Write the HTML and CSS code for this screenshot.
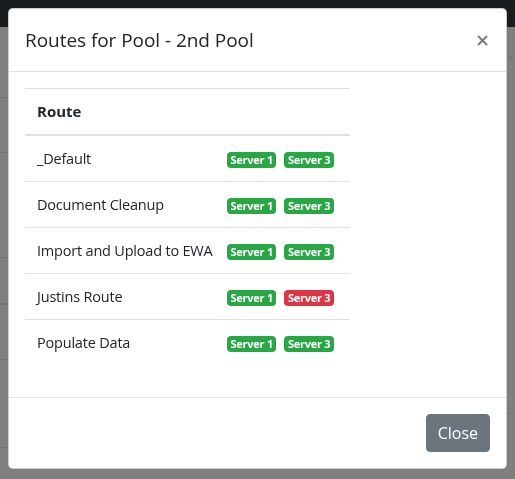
FILE: index.html
```html
<!DOCTYPE html>
<html lang="en">
<head>
<meta charset="utf-8">
<title>Routes for Pool</title>
<link rel="stylesheet" href="styles.css">
</head>
<body>
<div class="page">
  <div class="navbar"></div>
  <div class="page-body">
    <div class="page-col">
      <div class="bg-row h71"></div>
      <div class="bg-row h54"></div>
      <div class="bg-row h104"></div>
      <div class="bg-row h46 thick"></div>
      <div class="bg-row h54"></div>
      <div class="bg-row h87"></div>
    </div>
    <div class="page-col">
      <div class="bg-row h30"></div>
      <div class="bg-row h355"></div>
    </div>
  </div>
</div>
<div class="backdrop"></div>
<div class="modal">
  <div class="modal-content">
    <div class="modal-header">
      <h5 class="modal-title">Routes for Pool - 2nd Pool</h5>
      <button class="close" type="button">&times;</button>
    </div>
    <div class="modal-body">
      <table class="table">
        <colgroup><col class="col-name"><col class="col-servers"></colgroup>
        <thead>
          <tr><th>Route</th><th></th></tr>
        </thead>
        <tbody>
          <tr><td>_Default</td><td class="servers"><span class="badge ok">Server 1</span><span class="badge ok">Server 3</span></td></tr>
          <tr><td>Document Cleanup</td><td class="servers"><span class="badge ok">Server 1</span><span class="badge ok">Server 3</span></td></tr>
          <tr><td>Import and Upload to EWA</td><td class="servers"><span class="badge ok">Server 1</span><span class="badge ok">Server 3</span></td></tr>
          <tr><td>Justins Route</td><td class="servers"><span class="badge ok">Server 1</span><span class="badge bad">Server 3</span></td></tr>
          <tr><td>Populate Data</td><td class="servers"><span class="badge ok">Server 1</span><span class="badge ok">Server 3</span></td></tr>
        </tbody>
      </table>
    </div>
    <div class="modal-footer">
      <button class="btn" type="button">Close</button>
    </div>
  </div>
</div>
</body>
</html>
```
FILE: styles.css
```css
* { box-sizing: border-box; }
html, body { margin: 0; padding: 0; }
body {
  width: 515px;
  height: 479px;
  overflow: hidden;
  background: #fff;
  font-family: "Open Sans", "Noto Sans", sans-serif;
  font-size: 15px;
  color: #212529;
}
.navbar { height: 27px; background: #343a40; }
.page-body { display: flex; justify-content: space-between; }
.page-col { width: 30px; }
.bg-row { border-bottom: 1px solid #dee2e6; }
.bg-row.thick { border-bottom-width: 2px; }
.h30 { height: 31px; }
.h46 { height: 47px; }
.h54 { height: 55px; }
.h71 { height: 71px; }
.h87 { height: 88px; }
.h104 { height: 105px; }
.h355 { height: 356px; }

.backdrop {
  position: fixed;
  inset: 0;
  background: rgba(0, 0, 0, 0.5);
}
.modal {
  position: fixed;
  inset: 0;
  padding: 8px;
}
.modal-content {
  background: #fff;
  border: 1px solid rgba(0, 0, 0, 0.2);
  border-radius: 4.8px;
  display: flex;
  flex-direction: column;
}
.modal-header {
  display: flex;
  align-items: flex-start;
  justify-content: space-between;
  padding: 16px;
  border-bottom: 1px solid #dee2e6;
}
.modal-title {
  margin: 0;
  font-size: 19px;
  font-weight: 400;
  line-height: 30px;
  letter-spacing: -0.05px;
}
.close {
  background: none;
  border: 0;
  padding: 16px;
  margin: -16px -16px -16px auto;
  font-family: "DejaVu Sans", sans-serif;
  font-size: 18px;
  font-weight: 700;
  line-height: 30px;
  color: #000;
  opacity: 0.5;
}
.modal-body { padding: 16px; }
.table {
  width: 325px;
  table-layout: fixed;
  border-collapse: collapse;
  margin-bottom: 16px;
}
.col-name { width: 190px; }
.col-servers { width: 135px; }
.table th, .table td {
  padding: 12px;
  line-height: 21px;
  text-align: left;
  border-top: 1px solid #dee2e6;
  vertical-align: top;
  white-space: nowrap;
}
.table th { font-weight: 700; border-bottom: 2px solid #dee2e6; }
.table td { font-size: 14.5px; letter-spacing: -0.2px; }
.table td.servers {
  padding-right: 0;
  vertical-align: middle;
  letter-spacing: 0;
}
.badge {
  display: inline-block;
  font-size: 11px;
  font-weight: 700;
  line-height: 12px;
  padding: 2px 3.5px;
  border-radius: 4px;
  letter-spacing: -0.25px;
  color: #fff;
  vertical-align: middle;
}
.badge + .badge { margin-left: 8px; }
.badge.ok { background: #28a745; }
.badge.bad { background: #dc3545; }
.modal-footer {
  display: flex;
  justify-content: flex-end;
  padding: 12px;
  border-top: 1px solid #dee2e6;
}
.btn {
  margin: 4px;
  font-family: inherit;
  font-size: 16px;
  line-height: 24px;
  padding: 6px 11px;
  border: 1px solid #6c757d;
  border-radius: 4px;
  background: #6c757d;
  color: #fff;
}
```
